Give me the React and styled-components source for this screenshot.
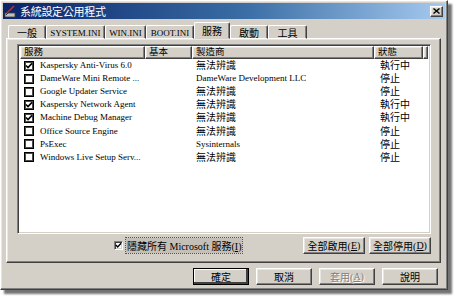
import React from "react";
import styled, { createGlobalStyle, css } from "styled-components";

const GlobalStyle = createGlobalStyle`
  html, body {
    margin: 0;
    padding: 0;
    background: #ffffff;
  }
  body {
    font-family: "Liberation Serif", "Noto Sans CJK TC", serif;
    font-size: 10px;
    color: #000;
  }
`;

const services = [
  { name: "Kaspersky Anti-Virus 6.0", vendor: "無法辨識", status: "執行中", on: true },
  { name: "DameWare Mini Remote ...", vendor: "DameWare Development LLC", latin: true, status: "停止", on: false },
  { name: "Google Updater Service", vendor: "無法辨識", status: "停止", on: false },
  { name: "Kaspersky Network Agent", vendor: "無法辨識", status: "執行中", on: true },
  { name: "Machine Debug Manager", vendor: "無法辨識", status: "執行中", on: true },
  { name: "Office Source Engine", vendor: "無法辨識", status: "停止", on: false },
  { name: "PsExec", vendor: "Sysinternals", latin: true, status: "停止", on: false },
  { name: "Windows Live Setup Serv...", vendor: "無法辨識", status: "停止", on: false },
];

const tabs = [
  { label: "一般", w: 38 },
  { label: "SYSTEM.INI", w: 59, latin: true },
  { label: "WIN.INI", w: 41, latin: true },
  { label: "BOOT.INI", w: 48, latin: true },
  { label: "服務", w: 36, active: true },
  { label: "啟動", w: 38 },
  { label: "工具", w: 39 },
];

const raised = css`
  border-top: 1px solid #ffffff;
  border-left: 1px solid #ffffff;
  border-right: 1px solid #404040;
  border-bottom: 1px solid #404040;
  box-shadow: inset -1px -1px 0 #808080, inset 1px 1px 0 #e8e6e2;
`;

const sunken = css`
  border-top: 1px solid #808080;
  border-left: 1px solid #808080;
  border-right: 1px solid #ffffff;
  border-bottom: 1px solid #ffffff;
  box-shadow: inset 1px 1px 0 #404040, inset -1px -1px 0 #d4d0c8;
`;

const Page = styled.div`
  width: 454px;
  height: 296px;
  overflow: hidden;
`;

const Window = styled.div`
  width: 448px;
  height: 290px;
  box-sizing: border-box;
  background: #d4d0c8;
  ${raised};
  box-shadow: inset -1px -1px 0 #808080, inset 1px 1px 0 #e8e6e2, 4px 4px 2px rgba(0, 0, 0, 0.55);
  padding: 2px;
  display: flex;
  flex-direction: column;
`;

const TitleBar = styled.div`
  height: 16px;
  background: linear-gradient(to right, #0a246a, #3a6ea5 55%, #a6caf0);
  display: flex;
  align-items: center;
  padding: 0 2px 0 1px;
  gap: 3px;
`;

const Title = styled.span`
  color: #ffffff;
  font-family: "Noto Sans CJK TC", sans-serif;
  font-size: 11px;
  flex: 1;
  letter-spacing: -0.3px;
`;

const CloseButton = styled.div`
  width: 13px;
  height: 11px;
  box-sizing: border-box;
  background: #d4d0c8;
  ${raised};
  display: flex;
  align-items: center;
  justify-content: center;
`;

const Body = styled.div`
  flex: 1;
  display: flex;
  flex-direction: column;
  padding: 3px 4px 0 3px;
`;

const TabRow = styled.div`
  display: flex;
  align-items: flex-end;
  height: 16px;
  padding-left: 2px;
  position: relative;
  z-index: 1;
`;

const Tab = styled.div`
  box-sizing: border-box;
  width: ${(p) => p.$w}px;
  height: ${(p) => (p.$active ? 17 : 14)}px;
  margin-bottom: -1px;
  display: flex;
  align-items: center;
  justify-content: center;
  background: #d4d0c8;
  border-top: 1px solid #ffffff;
  border-left: 1px solid #ffffff;
  border-right: 1px solid #404040;
  border-top-left-radius: 2px;
  border-top-right-radius: 2px;
  box-shadow: inset -1px 0 0 #808080;
  border-bottom: 1px solid ${(p) => (p.$active ? "#d4d0c8" : "#ffffff")};
  position: relative;
  z-index: ${(p) => (p.$active ? 2 : 0)};
  white-space: nowrap;
  font-size: ${(p) => (p.$latin ? 9 : 10)}px;
  padding-top: ${(p) => (p.$active ? 0 : 1)}px;
`;

const Panel = styled.div`
  box-sizing: border-box;
  height: 225px;
  background: #d4d0c8;
  ${raised};
  padding: 5px 9px 8px 10px;
  display: flex;
  flex-direction: column;
`;

const List = styled.div`
  box-sizing: border-box;
  height: 190px;
  background: #ffffff;
  ${sunken};
  padding: 1px 2px 2px;
  overflow: hidden;
`;

const Columns = "125px 47px 182px 49px 1fr";

const HeaderRow = styled.div`
  display: grid;
  grid-template-columns: ${Columns};
  grid-template-rows: 13px;
  height: 13px;
`;

const HeaderCell = styled.div`
  box-sizing: border-box;
  height: 13px;
  background: #d4d0c8;
  ${raised};
  padding-left: 3px;
  display: flex;
  align-items: center;
  font-size: 9.5px;
  line-height: 1;
`;

const Row = styled.div`
  display: grid;
  grid-template-columns: ${Columns};
  grid-template-rows: 13.1px;
  height: 13.1px;
  align-items: center;
  line-height: 13px;
`;

const NameCell = styled.div`
  display: flex;
  align-items: center;
  gap: 6px;
  padding-left: 4px;
  font-size: 9px;
  white-space: nowrap;
`;

const Cell = styled.div`
  padding-left: ${(p) => p.$pad || 4}px;
  font-size: ${(p) => (p.$latin ? 9 : 10)}px;
  white-space: nowrap;
  overflow: hidden;
`;

const ListCheck = styled.span`
  width: 10px;
  height: 10px;
  box-sizing: border-box;
  border: 1px solid #000;
  box-shadow: inset 0 0 0 1px #4a4a4a;
  background: #ffffff;
  display: inline-flex;
  align-items: center;
  justify-content: center;
  flex: none;
`;

const PanelFooter = styled.div`
  display: flex;
  align-items: center;
  margin-top: 3px;
  height: 17px;
`;

const HideOption = styled.label`
  display: flex;
  align-items: center;
  gap: 3px;
  margin-left: 97px;
  flex: 1;
`;

const SmallCheck = styled.span`
  width: 9px;
  height: 9px;
  box-sizing: border-box;
  background: #ffffff;
  ${sunken};
  display: inline-flex;
  align-items: center;
  justify-content: center;
`;

const FocusLabel = styled.span`
  outline: 1px dotted #555;
  padding: 0 1px;
  font-size: 10px;
  background: #c4c0b8;
`;

const Button = styled.div`
  box-sizing: border-box;
  width: ${(p) => p.$w || 56}px;
  height: 17px;
  background: #d4d0c8;
  ${raised};
  display: flex;
  align-items: center;
  justify-content: center;
  font-size: 10px;
  white-space: nowrap;
  color: ${(p) => (p.$disabled ? "#808080" : "#000")};
  text-shadow: ${(p) => (p.$disabled ? "1px 1px 0 #ffffff" : "none")};
  ${(p) =>
    p.$default &&
    css`
      outline: 1px solid #000;
      outline-offset: -1px;
      box-shadow: inset -2px -2px 0 #404040, inset 1px 1px 0 #ffffff;
    `}
`;

const ButtonGroup = styled.div`
  display: flex;
  gap: ${(p) => p.$gap || 4}px;
`;

const DialogFooter = styled.div`
  display: flex;
  justify-content: flex-end;
  padding: 5px 3px 0 0;
`;

const Check = ({ size = 8 }) => (
  <svg width={size} height={size} viewBox="0 0 8 8">
    <path d="M1 3.5 L3 5.6 L7 1.4" fill="none" stroke="#000" strokeWidth="1.6" />
  </svg>
);

const AppIcon = () => (
  <svg width="13" height="13" viewBox="0 0 13 13">
    <rect x="1" y="8" width="10" height="4" fill="#c0c0c0" stroke="#404040" strokeWidth="0.8" />
    <path d="M3 8 L10 1" stroke="#c03030" strokeWidth="1.6" />
    <path d="M2 10 L6 6" stroke="#303030" strokeWidth="1" />
  </svg>
);

const Mn = styled.u`
  text-decoration: underline;
`;

export default function App() {
  return (
    <Page>
      <GlobalStyle />
      <Window>
        <TitleBar>
          <AppIcon />
          <Title>系統設定公用程式</Title>
          <CloseButton>
            <svg width="7" height="6" viewBox="0 0 7 6">
              <path d="M0.5 0.5 L6.5 5.5 M6.5 0.5 L0.5 5.5" stroke="#000" strokeWidth="1.4" />
            </svg>
          </CloseButton>
        </TitleBar>
        <Body>
          <TabRow>
            {tabs.map((t) => (
              <Tab key={t.label} $w={t.w} $active={t.active} $latin={t.latin}>
                {t.label}
              </Tab>
            ))}
          </TabRow>
          <Panel>
            <List>
              <HeaderRow>
                <HeaderCell>服務</HeaderCell>
                <HeaderCell>基本</HeaderCell>
                <HeaderCell>製造商</HeaderCell>
                <HeaderCell>狀態</HeaderCell>
                <HeaderCell />
              </HeaderRow>
              {services.map((s) => (
                <Row key={s.name}>
                  <NameCell>
                    <ListCheck>{s.on && <Check />}</ListCheck>
                    {s.name}
                  </NameCell>
                  <Cell />
                  <Cell $latin={s.latin}>{s.vendor}</Cell>
                  <Cell $pad={6}>{s.status}</Cell>
                  <Cell />
                </Row>
              ))}
            </List>
            <PanelFooter>
              <HideOption>
                <SmallCheck>
                  <Check size={7} />
                </SmallCheck>
                <FocusLabel>
                  隱藏所有 Microsoft 服務(<Mn>I</Mn>)
                </FocusLabel>
              </HideOption>
              <ButtonGroup $gap={4}>
                <Button $w={62}>
                  全部啟用(<Mn>E</Mn>)
                </Button>
                <Button $w={62}>
                  全部停用(<Mn>D</Mn>)
                </Button>
              </ButtonGroup>
            </PanelFooter>
          </Panel>
          <DialogFooter>
            <ButtonGroup $gap={7}>
              <Button $default>確定</Button>
              <Button>取消</Button>
              <Button $disabled>
                套用(<Mn>A</Mn>)
              </Button>
              <Button>說明</Button>
            </ButtonGroup>
          </DialogFooter>
        </Body>
      </Window>
    </Page>
  );
}
